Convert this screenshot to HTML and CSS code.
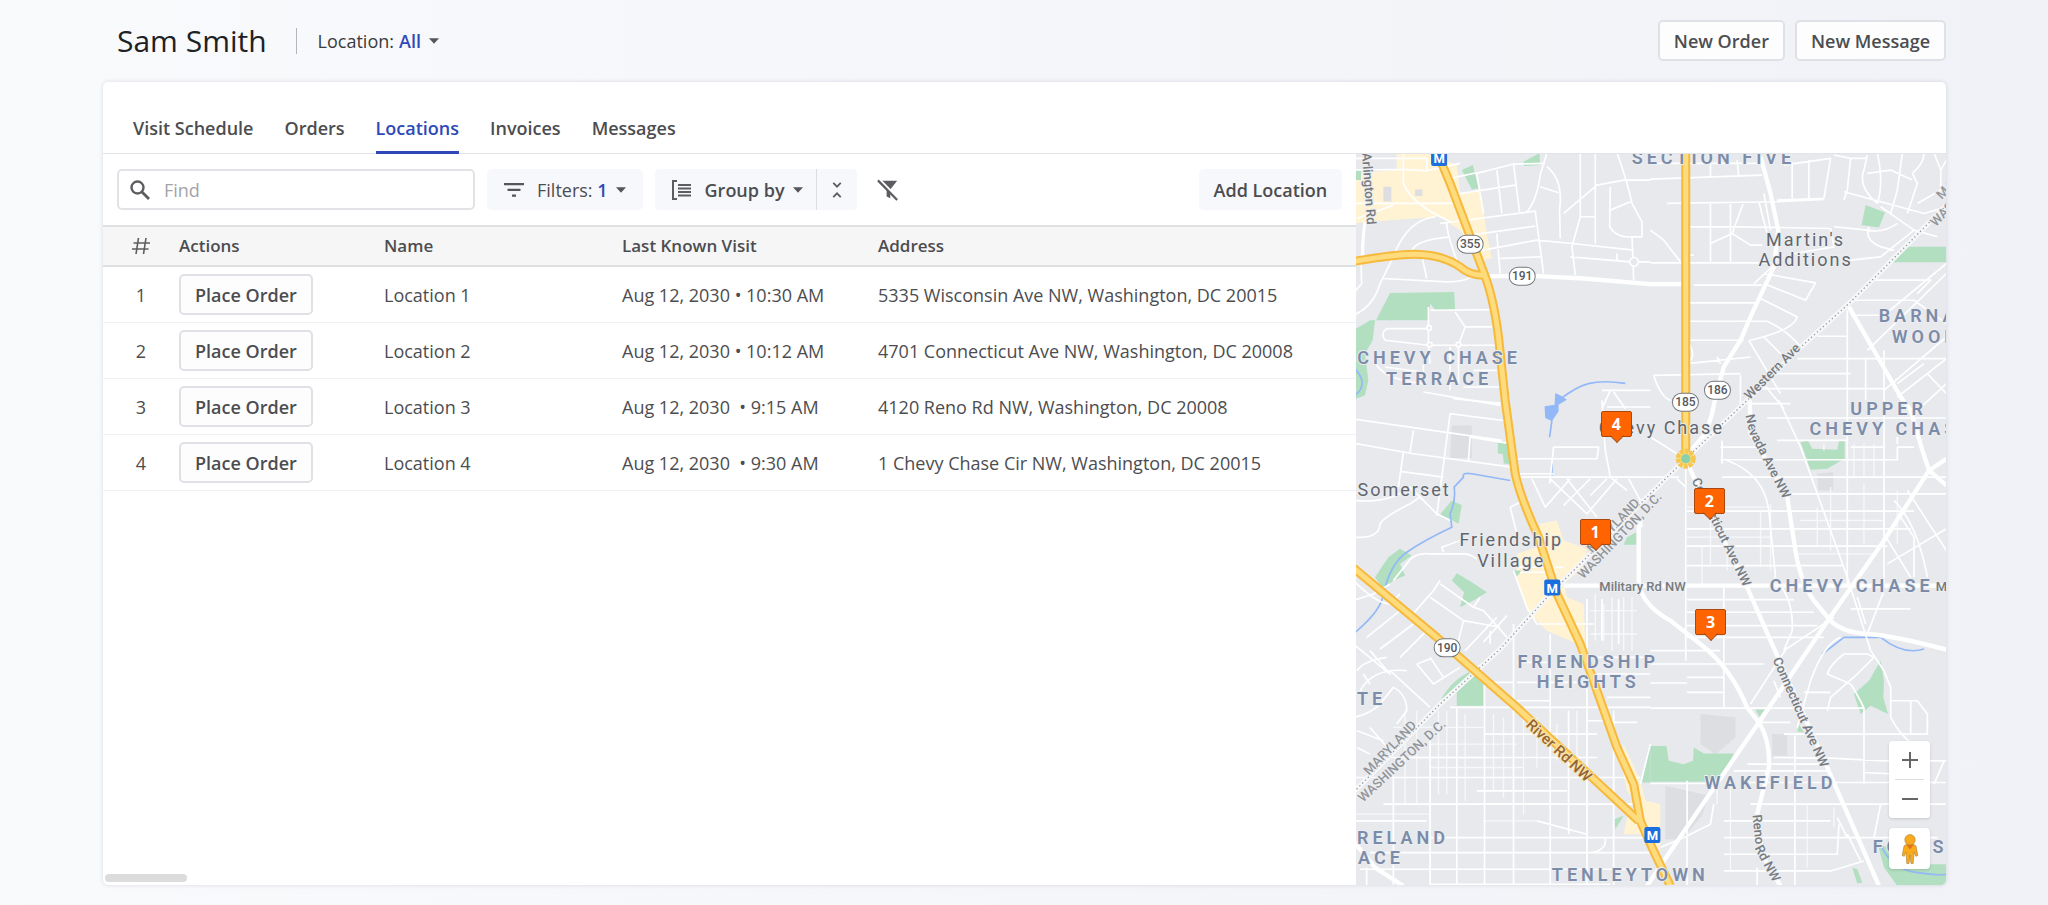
FILE: index.html
```html
<!DOCTYPE html>
<html lang="en">
<head>
<meta charset="utf-8">
<title>Sam Smith – Locations</title>
<link rel="stylesheet" href="styles.css">
</head>
<body>
<svg class="sprite" aria-hidden="true">
  <symbol id="caret" viewBox="0 0 12 7"><path d="M0 .2h12L6 6.800z" fill="currentColor"/></symbol>
</svg>
<header class="topbar">
  <h1 class="title">Sam Smith</h1>
  <div class="scope">
    <label for="scope">Location:</label>
    <select id="scope" class="scope-select"><option>All</option></select>
    <svg class="caret"><use href="#caret"/></svg>
  </div>
  <button class="btn btn-outline" type="button">New Order</button>
  <button class="btn btn-outline" type="button">New Message</button>
</header>

<main class="card">
  <nav class="tabs">
    <a class="tab" href="#">Visit Schedule</a>
    <a class="tab" href="#">Orders</a>
    <a class="tab active" href="#" aria-current="page">Locations</a>
    <a class="tab" href="#">Invoices</a>
    <a class="tab" href="#">Messages</a>
  </nav>
  <div class="split">
    <section class="list">
      <div class="toolbar">
        <label class="search">
          <svg class="icon-search" viewBox="0 0 20 20" fill="none" stroke="#5c5d60"><circle cx="7.500" cy="7.500" r="6" stroke-width="2.400"/><path d="M12 12l7 7" stroke-width="2.800"/></svg>
          <input type="text" placeholder="Find" aria-label="Find">
        </label>
        <button class="btn btn-soft filters" type="button">
          <svg class="icon-filter" viewBox="0 0 20 14" fill="#55565a"><path d="M0 0h20v2.300H0zM3.500 5.700h13V8h-13zM8 11.500h4v2.300H8z"/></svg>
          <span>Filters: <b>1</b></span>
          <svg class="caret"><use href="#caret"/></svg>
        </button>
        <div class="group">
          <button class="btn group-main" type="button">
            <svg class="icon-group" viewBox="0 0 20 20" fill="none" stroke="#5c5d60" stroke-width="2"><path d="M5 1H1v18h4M6 5h13M6 8.500h13M6 12h13M6 15.500h13"/></svg>
            <span>Group by</span>
            <svg class="caret"><use href="#caret"/></svg>
          </button>
          <button class="btn group-side" type="button" aria-label="Collapse groups">
            <svg class="icon-collapse" viewBox="0 0 12 20" fill="none" stroke="#5c5d60" stroke-width="2.200"><path d="M1.500 1.500L6 6l4.500-4.500M1.500 18.500L6 14l4.500 4.500"/></svg>
          </button>
        </div>
        <button class="icon-btn" type="button" aria-label="Clear filters">
          <svg class="icon-clear" viewBox="0 0 24 24"><path d="M3 2h19l-7.500 9.500V21l-4-2v-7.500z" fill="#5c5d60"/><path d="M2.500.500l21 21.500" stroke="#fff" stroke-width="3"/><path d="M0 3v21h9.500V11z" fill="#fff"/><path d="M1 1.500l21 21.500" stroke="#5c5d60" stroke-width="2.400"/></svg>
        </button>
        <button class="btn btn-soft add" type="button">Add Location</button>
      </div>
      <table class="grid">
        <colgroup><col class="c-num"><col class="c-act"><col class="c-name"><col class="c-visit"><col></colgroup>
        <thead>
          <tr><th class="num"><svg class="icon-hash" viewBox="0 0 18 16" fill="none" stroke="#5c5d60" stroke-width="1.600" role="img" aria-label="Number"><path d="M6.500 0L4 16M14 0l-2.500 16M1.500 5H18M0 11h16.500"/></svg></th><th>Actions</th><th>Name</th><th>Last Known Visit</th><th>Address</th></tr>
        </thead>
        <tbody>
          <tr><td class="num">1</td><td><button class="btn btn-outline" type="button">Place Order</button></td><td>Location 1</td><td>Aug 12, 2030 • 10:30 AM</td><td>5335 Wisconsin Ave NW, Washington, DC 20015</td></tr>
          <tr><td class="num">2</td><td><button class="btn btn-outline" type="button">Place Order</button></td><td>Location 2</td><td>Aug 12, 2030 • 10:12 AM</td><td>4701 Connecticut Ave NW, Washington, DC 20008</td></tr>
          <tr><td class="num">3</td><td><button class="btn btn-outline" type="button">Place Order</button></td><td>Location 3</td><td>Aug 12, 2030&nbsp; • 9:15 AM</td><td>4120 Reno Rd NW, Washington, DC 20008</td></tr>
          <tr><td class="num">4</td><td><button class="btn btn-outline" type="button">Place Order</button></td><td>Location 4</td><td>Aug 12, 2030&nbsp; • 9:30 AM</td><td>1 Chevy Chase Cir NW, Washington, DC 20015</td></tr>
        </tbody>
      </table>
      <div class="scroll-thumb"></div>
    </section>

    <section class="map" aria-label="Map">
      <svg class="map-art" viewBox="6 3 589 732" preserveAspectRatio="xMidYMid slice">
        <g transform="scale(.33333)" fill="none" stroke-linejoin="round">
          <!-- built-up and institutional blocks -->
          <g fill="#fff3d3">
            <path d="M10 70L140 60V9H230L320 45L330 130L390 120L410 250L425 325L395 330L330 240L270 200L130 210L10 220z"/>
            <path d="M570 1120L620 1110L640 1170L710 1195L700 1250L640 1300L650 1340L700 1360L705 1490L660 1470L590 1440L530 1380L500 1280L500 1210L560 1190z"/>
            <path d="M820 1780L870 1890L885 1950L930 1960L930 2100L890 2050L820 2050L830 2000L860 1960L830 1920L810 1830z"/>
          </g>
          <g fill="#dcdee2">
            <path d="M305 825h60v98h-65zM100 110h24v44h-24zM195 118h22v20h-22zM1050 1690l105 10v60l-60 50-45-30zM945 1905l130 30-20 60-60 70h-50zM1265 1750h45v65h-45zM1400 970l48-5v55h-45z"/>
          </g>
          <!-- parks -->
          <g fill="#b1dfc0">
            <path d="M120 428L312 425L315 478L258 482L240 460L235 510H78z"/>
            <path d="M10 540L60 510H75L68 570L45 610L55 690L45 735L10 748zM10 60h23v30H10z"/>
            <path d="M335 60L368 45L385 115L365 118zM520 35L568 9L570 45L522 48z"/>
            <path d="M443 876h28l8 65-18-2-3-28-15-2zM270 1092l35-42 30 14-10 56-22-12z"/>
            <path d="M75 1280L115 1220L150 1195L185 1215L150 1240L165 1275L130 1290L100 1315z"/>
            <path d="M305 1290L320 1268L365 1295L410 1325L370 1350L330 1370L342 1325zM490 1260l25 0-15 18zM830 1160l28-15v38h-38z"/>
            <path d="M265 1665Q290 1600 355 1565L380 1580L400 1590V1665H320V1610z"/>
            <path d="M875 1895L900 1780V1895zM792 2005l28-10-25 40z"/>
            <path d="M900 1786H948L955 1830L1000 1840L1028 1830L1030 1790L1060 1808H1150L1110 1893H900z"/>
            <path d="M1545 165L1603 187L1585 232L1533 225zM1655 290H1787V336H1615z"/>
            <path d="M1350 875L1372 870L1385 895L1460 898L1465 872H1482V924L1430 955L1380 958z"/>
            <path d="M1510 1630L1555 1590L1590 1530L1600 1590L1598 1640L1612 1690L1560 1665L1530 1690z"/>
            <path d="M1215 1676h27l-15 22zM1345 1720l15 25-20-3zM1505 2150l15 5 15 40-15 3zM1580 2075L1610 2090L1660 2140H1787V2205H1640L1600 2150z"/>
          </g>
          <!-- water -->
          <g stroke="#93b8f7" stroke-width="5">
            <path d="M632 745C690 700 730 685 825 699M605 810L598 860M605 940V975M480 990L365 970Q335 965 340 980L312 1010Q318 1050 300 1090L305 1130Q220 1170 170 1205T100 1330Q95 1380 10 1450M1415 1510L1480 1460L1590 1460Q1660 1515 1720 1495M10 650Q60 700 15 735M1590 2080Q1620 2155 1700 2165T1787 2170"/>
            <path d="M615 728l20 10 15 10-25 15 0 20-20 30-20-10-2-35 30-5z" fill="#93b8f7" stroke="none"/>
          </g>
          <!-- side streets -->
          <g stroke="#f7f8fa" stroke-width="4">
            <path d="M165 1680V1960M200 1680V1960M265 1680V1930M290 1680V1930M345 1690V1950M430 1690V1920M460 1700V1940M520 1700V1990M560 1700V1850M620 1720V1830M680 1680V1820M10 1990H240M130 1730H400M240 1780H500M240 1850H520M130 1820H400M400 2010H560M400 1960H640"/>
            <path d="M1230 1085V1250M1260 1060V1260M1055 1190V1310M1080 1080V1240M1130 1180V1260M1510 880V980M1540 880V980M1570 880V980M1440 1010V1200M1420 880V900M1400 1070V1190M1540 1000V1180M1640 1020V1180M1010 1070H1260M1010 1160H1260M1350 1110H1600M1340 1210H1580"/>
            <path d="M760 1360V1470M735 1330V1470M785 1340V1500M820 1340V1500M845 1340V1500M720 1380H860M720 1450H860M1100 1900V1960M1140 1910V2160M1370 1960V2150M1450 1970V2030"/>
          </g>
          <g stroke="#fff" stroke-width="5">
            <!-- north-west -->
            <path d="M10 60L160 58L230 62L330 40M10 25H230V60M160 9V100Q180 150 260 195L300 215M10 160H310M21 205L130 165M380 70L490 42L585 40M380 70L400 190M440 60L455 190M490 42L508 185M300 135L495 105M300 85L380 68M270 220L555 183L580 370M360 255L555 228M440 250L450 370M370 305L560 270L665 280L850 300M450 325L570 320M590 9L570 75Q560 150 530 185M590 50Q640 90 628 180L630 265M570 110L625 128M640 190L740 105L820 90H900M690 9V200L665 290L675 375M735 9V280M690 200H735M780 110L778 230Q800 265 845 260M780 180L840 155M800 9Q830 90 845 160L875 215V260H845L850 390M660 320L840 335H900M800 310V330M255 200Q170 210 130 320L90 400Q70 470 10 495M185 305Q190 270 300 260M290 220Q290 250 320 330M215 315L230 385M100 385L290 395Q350 395 380 370M45 220Q30 300 35 400L10 430"/>
            <path d="M240 480L430 478M315 485L345 530H425M345 530L325 585H440M235 470V585L240 640M235 535H110Q90 550 105 570L235 585H325M325 585V700M300 590V720M105 650L215 665M80 645Q110 690 220 700V640M220 725L450 765M440 660H370M340 710H450"/>
            <path d="M10 806L455 870M10 878L190 910L485 950M190 840L180 905M160 905L145 1010M150 963L280 980M300 790L260 1095M360 860L355 930M360 860L470 878M300 790L470 812M310 745L460 760"/>
            <path d="M10 1050Q120 1060 180 1010M10 1160Q90 1165 90 1120Q100 1100 180 1060L210 1040L260 1090L300 1110M210 1040L180 1010M490 970H610M490 925H740L745 890L610 890L598 1000M510 980H900M545 985L585 1070L660 985M600 985L710 1090L800 985M650 985L740 1100M720 985L640 1065M770 985L720 1035M835 985L870 1050M755 750L765 900L780 980L830 1020M480 1070L520 1050M480 1070L500 1150M490 1260L530 1370L560 1420H730M530 1370L500 1290M500 1250H640M510 1265H620"/>
            <path d="M10 1350L70 1330L120 1300M130 1290L170 1240Q190 1205 240 1210L340 1210Q360 1210 380 1225M280 1205L275 1190L330 1170M10 1290Q80 1360 120 1360L150 1330M50 1460L150 1380M90 1495L190 1420M150 1520L230 1440M240 1340L340 1410L325 1470M270 1300L370 1370L400 1380L470 1460M180 1400L250 1320L270 1290M340 1410L450 1430M370 1370L390 1340M400 1475L470 1395M345 1500L440 1400M10 1480L120 1570L60 1500M21 1560Q40 1530 110 1520"/>
            <path d="M900 40L1230 40M755 720H900M780 720L755 775M790 725L825 775M770 770H900M1450 1400L1300 1500"/>
            <!-- north-east -->
            <path d="M900 87L1235 75M950 160L1280 155L1420 148M1010 230H1170L1440 235M1080 40V80M1160 30L1165 80M1080 155V335M1140 155V335M1180 155L1145 250L1080 280M1145 250L1200 285H1235M1225 155L1250 250M900 240L940 270L990 335M1240 130L1260 240M1010 315H1030M900 338H1260M1030 405L1235 405M1010 458H1215M1010 513H1250Q1310 540 1350 590M1010 570H1180M1015 580Q1040 620 1010 640L1200 620M910 675L1170 670M910 675Q930 740 960 750M1170 675V760M1100 620L1110 640M1300 45L1440 25L1420 145L1280 150M1325 35V145M1375 30V145M1450 15L1500 25L1490 120L1480 150M1500 25H1550M1550 15L1540 60Q1520 110 1580 160M1580 9Q1600 100 1580 160M1480 125L1720 190M1655 9L1640 120L1620 190M1550 70L1620 60L1685 90M1685 70Q1720 40 1720 9M1685 70L1700 100L1680 160L1670 190M1720 190L1787 170M1750 9L1770 60V120L1700 160M1770 60L1787 30M1450 230L1550 240Q1600 250 1640 220M1590 170L1690 240L1590 320L1500 330M1690 240L1760 260M1555 230Q1540 270 1590 290L1630 300M1440 235L1450 290L1330 310M1240 370L1395 398L1365 450L1240 400M1230 445L1340 500Q1330 540 1200 570M1195 570L1290 730M1240 560L1290 610M1265 350L1210 400M1560 390H1740L1700 430M1510 450H1690L1787 520M1490 480V1308M1500 495H1600L1787 340M1550 600L1787 370M1400 558H1490M1340 625H1787M1545 625V750M1600 600V700M1200 715H1600M1270 670H1500M1600 700V1308M1600 720L1787 560M1690 790L1787 700M1640 700L1720 640M1230 690L1300 775M1640 740L1787 625M1730 670L1787 730"/>
            <!-- east -->
            <path d="M1195 760H1320M1250 803H1787M1280 870H1490M1110 928L1640 928M1115 980H1787M1320 1030H1787M1010 1082H1690M1010 1135H1680M1010 1187H1610M1010 1245H1480M1010 1347H1330M1010 1385H1390M1010 1425H1400M1010 1460H1420M1110 890H1240M1285 750L1350 890L1490 1280M1130 930Q1240 970 1255 1080L1275 1280M1270 1280Q1330 1340 1325 1440L1300 1500M1115 870V940M1006 950V1530M1120 1310V1670M900 860L980 910M900 980H985M980 985L1006 1010M1490 1280L1560 1500L1600 1560M1610 1240L1787 1135M1630 1050Q1700 1120 1730 1280M1650 1100L1690 1160V1280M1670 1020L1787 1200M1600 1150L1680 1280M1600 1320L1550 1450M1500 1375H1680M1520 1340L1545 1420M1640 860V880M1500 890H1600M1640 890H1690M1640 890V930"/>
            <!-- south-east -->
            <path d="M900 1500H1110M900 1540H1240M900 1597H1010M1010 1580H1120M1010 1625H1120M900 1672H1540M1540 1672V1900M1300 1750H1730V1690L1700 1650H1620M1270 1820L1440 1822L1600 1830H1787M1180 1895H1787M1333 1755V2205M1150 1860H1430M1200 1960H1787M1120 2010H1440M1120 2060H1760M1120 2110H1460L1465 2020M1120 2160H1440L1540 2130M1010 1890V2205M1090 1960L1080 2020L1000 2060L930 2090M900 1898H1100M1190 1840H1430M1230 1715H1320M1360 1625H1440M1340 1730L1380 1590Q1420 1480 1470 1460M1430 1680L1440 1640L1520 1570L1570 1520L1550 1510L1480 1510Q1440 1540 1430 1570L1500 1600Q1520 1630 1540 1672M1600 1560L1620 1610V1700Q1650 1760 1700 1790M1680 1650V1750M1540 1865L1640 1870M1570 2060L1590 1960M1490 2050L1530 2130M1460 2000L1490 2060M1220 2150V2205M1780 1830L1750 1900M1200 1660L1310 1490M1270 1590L1290 1640"/>
            <!-- south-west -->
            <path d="M490 1420V2205M403 1590V2205M320 1670V2205M240 1770V2205M130 1840V2205M600 1450V2205M710 1345V2110M710 1670V2205M755 1345V1470M805 1345V1480M790 1680V2205M655 1680V2050M300 1670H900M400 1750H740M100 1820H740M10 1880H870M100 1960H870M380 1920H650M10 2010H230M240 2060H900M60 2105H900M30 2155H900M240 2200H780M560 2010L710 2050M500 1535H590M500 1595H720M500 1650H600M400 1595H490M770 1640H900M710 1710H790M720 2105Q770 2100 765 2060M720 1520H880M780 1715H860M740 1570H900M870 1900L900 1780M200 1540L250 1600L330 1550M240 1520L280 1580M200 1540L240 1525M30 1620Q70 1550 170 1560M10 1700Q60 1690 90 1660L130 1610Q170 1630 170 1680L140 1720M21 1740L100 1770M21 1790L60 1810M60 1730L120 1800M120 1560L240 1670M60 1600L40 1570M420 1480V1440M50 2150V2205"/>
          </g>
          <!-- avenues -->
          <g stroke="#fff" stroke-width="13">
            <path d="M410 378L560 378L700 385L900 402H1005"/>
            <path d="M1230 20L1260 130L1283 240L1270 350L1200 500L1170 570L1120 650L1095 740L1085 790L1065 850L1030 890L1006 925"/>
            <path d="M1495 470L1650 740L1680 780L1715 900L1735 960L1787 1005M1787 925L1735 960L1600 1170L1435 1405L1225 1715L940 2130L890 2205"/>
            <path d="M1198 750L1200 850L1260 950L1310 1040L1330 1170Q1345 1290 1390 1350L1435 1405Q1470 1445 1550 1450T1787 1497"/>
            <path d="M1006 925L1030 980L1100 1130L1190 1310L1260 1470L1430 1850L1585 2205"/>
            <path d="M865 1120V1290Q870 1360 960 1410L1050 1480Q1140 1550 1190 1670L1225 1715Q1260 1770 1255 1850L1215 2010L1240 2120L1290 2205"/>
            <path d="M640 1305H1787M10 2070L75 2150L160 2205M870 1130V1100"/>
            <path d="M45 215Q35 280 40 330" stroke-width="9"/>
          </g>
          <g stroke="#fff" stroke-width="5" fill="#e7e9ed"><circle cx="851" cy="335" r="13"/><circle cx="237" cy="533" r="7"/><circle cx="239" cy="583" r="7"/><circle cx="325" cy="583" r="7"/></g>
          <!-- state line -->
          <path d="M1787 165L1500 455L1340 600L1185 755L1006 925L870 1060L600 1330L450 1495L270 1660L10 1925" stroke="#f6f7f8" stroke-width="15"/>
          <path d="M1787 165L1500 455L1340 600L1185 755L1006 925L870 1060L600 1330L450 1495L270 1660L10 1925" stroke="#96999d" stroke-width="4" stroke-dasharray="4 8"/>
          <!-- highways -->
          <g stroke="#f6b93c" stroke-width="27">
            <path d="M10 334C150 310 250 295 330 350Q360 376 400 375"/>
            <path d="M262 9L300 100L400 365Q430 440 445 560L465 750L495 970Q510 1040 565 1160L620 1330L690 1480L740 1620L800 1790L850 1900L870 2010L905 2090L960 2205"/>
            <path d="M10 1252L260 1460L500 1670L865 2010"/>
            <path d="M1006 9V905"/>
          </g>
          <g stroke="#fedb7c" stroke-width="15">
            <path d="M10 334C150 310 250 295 330 350Q360 376 400 375"/>
            <path d="M262 9L300 100L400 365Q430 440 445 560L465 750L495 970Q510 1040 565 1160L620 1330L690 1480L740 1620L800 1790L850 1900L870 2010L905 2090L960 2205"/>
            <path d="M10 1252L260 1460L500 1670L865 2010"/>
            <path d="M1006 9V905"/>
          </g>
          <circle cx="1006" cy="925" r="23" stroke="#f6c650" stroke-width="14" stroke-dasharray="12 3" fill="#fedb7c"/>
          <circle cx="1006" cy="925" r="14" fill="#8ad0a9"/>
        </g>
        <!-- route shields -->
        <g class="shield">
          <g transform="translate(120 94)"><rect x="-13" y="-9" width="26" height="18" rx="9"/><text y="4">355</text></g>
          <g transform="translate(172 126)"><rect x="-13" y="-9" width="26" height="18" rx="9"/><text y="4">191</text></g>
          <g transform="translate(335 252)"><rect x="-13" y="-9" width="26" height="18" rx="9"/><text y="4">185</text></g>
          <g transform="translate(367 240)"><rect x="-13" y="-9" width="26" height="18" rx="9"/><text y="4">186</text></g>
          <g transform="translate(97 497)"><rect x="-13" y="-9" width="26" height="18" rx="9"/><text y="4">190</text></g>
        </g>
        <g class="metro">
          <g transform="translate(89 8)"><rect x="-8" y="-8" width="16" height="16" rx="2"/><text y="5">M</text></g>
          <g transform="translate(202 437)"><rect x="-8" y="-8" width="16" height="16" rx="2"/><text y="5">M</text></g>
          <g transform="translate(302 684)"><rect x="-8" y="-8" width="16" height="16" rx="2"/><text y="5">M</text></g>
        </g>
        <g class="district">
          <text x="89" y="214">CHEVY CHASE</text><text x="89" y="235">TERRACE</text>
          <text x="363" y="14">SECTION FIVE</text>
          <text class="from" x="528" y="172">BARNABY</text><text class="from" x="541" y="193">WOODS</text>
          <text x="538" y="265">UPPER</text><text class="from" x="459" y="285">CHEVY CHASE</text>
          <text x="501" y="441">CHEVY CHASE</text>
          <text x="238" y="517">FRIENDSHIP</text><text x="238" y="537">HEIGHTS</text>
          <text x="420" y="638">WAKEFIELD</text>
          <text x="280" y="730">TENLEYTOWN</text>
          <text class="from" x="7" y="554">TE</text>
          <text class="from" x="7" y="693">RELAND</text><text class="from" x="8" y="713">ACE</text>
          <text class="from" x="522" y="702">FOREST</text>
        </g>
        <g class="town">
          <text x="455" y="96">Martin's</text><text x="455" y="116">Additions</text>
          <text x="54" y="346">Somerset</text>
          <text x="161" y="395">Friendship</text><text x="161" y="416">Village</text>
          <text x="311" y="284">Chevy Chase</text>
        </g>
        <g class="road">
          <text transform="translate(12 3) rotate(86)">Arlington Rd</text>
          <text transform="translate(399 250) rotate(-45)">Western Ave</text>
          <text transform="translate(395 265) rotate(78)">Ne</text>
          <text transform="translate(398 281) rotate(63)">vada Ave NW</text>
          <text transform="translate(341 330) rotate(64)">Connecticut Ave NW</text>
          <text x="249" y="440">Military Rd NW</text>
          <text x="585" y="440">Military Rd</text>
          <text transform="translate(422 509) rotate(66)">Connecticut Ave NW</text>
          <text transform="translate(402 664) rotate(84)">Reno</text>
          <text transform="translate(404 697) rotate(62)">Rd NW</text>
        </g>
        <g class="border">
          <text transform="translate(19 625) rotate(-46)">MARYLAND</text>
          <text transform="translate(13 652) rotate(-43)">WASHINGTON, D.C.</text>
          <text transform="translate(242 403) rotate(-46)">MARYLAND</text>
          <text transform="translate(233 429) rotate(-46)">WASHINGTON, D.C.</text>
          <text transform="translate(585 77) rotate(-46)">WASHINGTON</text>
          <text transform="translate(591 50) rotate(-46)">MARYLAND</text>
        </g>
        <text class="river" transform="translate(175 575) rotate(43)">River Rd NW</text>
      </svg>

      <button class="pin pin-4" type="button">4</button>
      <button class="pin pin-1" type="button">1</button>
      <button class="pin pin-2" type="button">2</button>
      <button class="pin pin-3" type="button">3</button>

      <div class="controls">
        <div class="zoom">
          <button type="button" aria-label="Zoom in"><svg class="sign" viewBox="0 0 16 16"><path d="M7 0h2v7h7v2H9v7H7V9H0V7h7z"/></svg></button>
          <hr class="rule">
          <button type="button" aria-label="Zoom out"><svg class="sign" viewBox="0 0 16 16"><path d="M0 7h16v2H0z"/></svg></button>
        </div>
        <button class="pegman" type="button" aria-label="Street view">
          <svg viewBox="0 0 18 30" fill="#f9ab1c" stroke="#a8803a" stroke-width=".600"><path d="M5 10.500h8l2 1.500 1.800 9.500-2 .8L13 18l-.8 11.500H10L9 21l-1 8.500H5.800L5 18l-1.800 4.300-2-.8L3 12z"/><circle cx="9" cy="5.800" r="5.200"/><path d="M5.500 11h7L9 15.500z" fill="#e5711f" stroke="none"/></svg>
        </button>
      </div>
    </section>
  </div>
</main>
</body>
</html>
```
FILE: styles.css
```css
* { box-sizing: border-box; }

body {
  margin: 0;
  min-height: 100vh;
  padding: 0 102px 20px 103px;
  display: flex;
  flex-direction: column;
  font: 18px/24px "Open Sans", "Noto Sans", sans-serif;
  color: #4c4d50;
  background: linear-gradient(to right, #f9fafc, #f1f2f7);
}

button, input, select { font: inherit; color: inherit; margin: 0; }
button { cursor: pointer; }
.sprite { position: absolute; width: 0; height: 0; }
.caret { width: 10px; height: 6px; flex: none; color: #55565a; }

/* page header */
.topbar {
  display: flex;
  align-items: center;
  gap: 10px;
  height: 82px;
  padding: 0 0 1px 14px;
}
.title {
  margin: 0 19px 0 0;
  font-size: 30px;
  line-height: 40px;
  font-weight: 400;
  color: #202124;
}
.scope {
  display: flex;
  align-items: center;
  gap: 5px;
  height: 26px;
  margin-right: auto;
  padding-left: 21px;
  border-left: 1px solid #b3b5ba;
  color: #3a3b3e;
}
.scope-select {
  appearance: none;
  field-sizing: content;
  padding: 0;
  border: 0;
  background: none;
  font-weight: 600;
  color: #2f49b8;
}
.scope .caret { margin-left: 3px; }

.btn {
  height: 41px;
  padding: 0 15px;
  border: 0;
  border-radius: 5px;
  background: none;
  font-weight: 600;
  white-space: nowrap;
}
.btn-outline {
  padding: 0 14px;
  border: 2px solid #e0e1e6;
  background: #fdfdfe;
}
.btn-soft { background: #f7f8fc; }

/* card */
.card {
  flex: 1;
  display: flex;
  flex-direction: column;
  background: #fff;
  border-radius: 5px;
  box-shadow: 0 0 4px rgba(40, 50, 90, .16);
  overflow: hidden;
}
.tabs {
  display: flex;
  gap: 31px;
  padding: 23px 30px 0;
  border-bottom: 1px solid #e3e4e7;
}
.tab {
  padding: 11px 0;
  margin-bottom: -1px;
  border-bottom: 3px solid transparent;
  font-weight: 600;
  color: #4c4d50;
  text-decoration: none;
}
.tab.active { color: #2f49b8; border-color: #2f49b8; }

.split {
  flex: 1;
  display: grid;
  grid-template-columns: minmax(0, 1fr) 32%;
}
.list { display: flex; flex-direction: column; }

.toolbar {
  display: flex;
  align-items: center;
  gap: 12px;
  padding: 15px 14px;
}
.search {
  flex: 0 1 358px;
  display: flex;
  align-items: center;
  gap: 14px;
  height: 41px;
  padding: 0 11px;
  border: 2px solid #e2e3e6;
  border-radius: 5px;
}
.search input { flex: 1; min-width: 0; border: 0; padding: 0; outline: 0; background: none; }
.search input::placeholder { color: #a2a4a8; opacity: 1; }
.icon-search { width: 20px; height: 20px; flex: none; }

.filters {
  display: flex;
  align-items: center;
  padding: 0 17px;
  font-weight: 400;
}
.filters b { font-weight: 600; color: #2f49b8; }
.icon-filter { width: 20px; height: 14px; margin-right: 13px; }
.filters .caret, .group .caret { margin-left: 8px; }
.group { display: flex; background: #f7f8fc; border-radius: 4px; }
.group-main { display: flex; align-items: center; padding: 0 13px 0 17px; }
.group-side { display: flex; align-items: center; border-left: 1px solid #dcdde2; border-radius: 0; }
.icon-group { width: 20px; height: 20px; margin-right: 13px; }
.icon-collapse { width: 10px; height: 18px; }
.icon-btn { display: flex; margin-left: 8px; padding: 0; border: 0; background: none; }
.icon-clear { width: 22px; height: 22px; }
.add { margin-left: auto; }

/* table */
.grid { width: 100%; table-layout: fixed; border-collapse: separate; border-spacing: 0; }
.c-num { width: 76px; }
.c-act { width: 205px; }
.c-name { width: 238px; }
.c-visit { width: 256px; }
.grid th, .grid td { padding: 0; text-align: left; white-space: nowrap; }
.grid th {
  height: 42px;
  font-size: 17px;
  font-weight: 600;
  background: #f6f6f7;
  border-top: 2px solid #dfe0e2;
  border-bottom: 2px solid #dfe0e2;
}
.grid td { height: 56px; border-bottom: 1px solid #f1f1f3; }
.grid .num { text-align: center; }
.icon-hash { display: block; width: 18px; height: 16px; margin: 0 auto; }
.scroll-thumb {
  width: 82px;
  height: 8px;
  margin: auto 0 3px 2px;
  border-radius: 4px;
  background: #dcdcdd;
}

/* map */
.map { position: relative; overflow: hidden; background: #e7e9ed; font-family: Roboto, sans-serif; }
.map-art { position: absolute; inset: 0; width: 100%; height: 100%; }
.map-art text { paint-order: stroke; stroke: #eceef1; stroke-width: 2px; stroke-linejoin: round; }
.district text { font-size: 18px; font-weight: 600; letter-spacing: 4px; fill: #7c8ca8; text-anchor: middle; }
.town text { font-size: 18px; letter-spacing: 2px; fill: #62666c; text-anchor: middle; }
.map-art .from { text-anchor: start; }
.road text { font-size: 13px; font-weight: 500; fill: #777b80; }
.border text { font-size: 13px; font-weight: 500; fill: #929599; }
.map-art .river { font-size: 15px; font-weight: 500; fill: #946434; stroke: #fbe6b0; }
.shield rect { fill: #fff; stroke: #76797d; stroke-width: 1px; }
.shield text { font-size: 12px; font-weight: 500; fill: #55585c; text-anchor: middle; stroke: none; }
.metro rect { fill: #1a6fe0; }
.metro text { font-size: 13px; font-weight: 700; fill: #fff; text-anchor: middle; stroke: none; }

.pin {
  position: absolute;
  width: 31px;
  height: 26px;
  margin: -30px 0 0 -15px;
  padding: 0;
  border: 1px solid #a9480c;
  border-radius: 2px;
  background: #ff6400;
  color: #fff;
  font: 700 16px/22px "Open Sans", sans-serif;
}
.pin::after {
  content: "";
  position: absolute;
  left: 10px;
  top: 19px;
  width: 9px;
  height: 9px;
  background: linear-gradient(135deg, transparent 45%, #ff6400 45%);
  border: solid #a9480c;
  border-width: 0 1px 1px 0;
  transform: rotate(45deg);
}
.pin-4 { left: 44%; top: 39.3%; }
.pin-1 { left: 40.4%; top: 54%; }
.pin-2 { left: 59.8%; top: 49.8%; }
.pin-3 { left: 60%; top: 66.4%; }

.controls {
  position: absolute;
  right: 16px;
  bottom: 16px;
  display: flex;
  flex-direction: column;
  gap: 10px;
}
.controls button {
  display: flex;
  align-items: center;
  justify-content: center;
  width: 41px;
  height: 38px;
  padding: 0;
  border: 0;
  background: #fff;
}
.zoom { background: #fff; border-radius: 4px; overflow: hidden; box-shadow: 0 1px 3px rgba(0, 0, 0, .15); }
.rule { height: 1px; margin: 0 6px; border: 0; background: #dedede; }
.sign { width: 16px; height: 16px; fill: #666; }
.controls .pegman { height: 41px; border-radius: 4px; box-shadow: 0 1px 3px rgba(0, 0, 0, .15); }
.pegman svg { width: 18px; height: 30px; }
```
